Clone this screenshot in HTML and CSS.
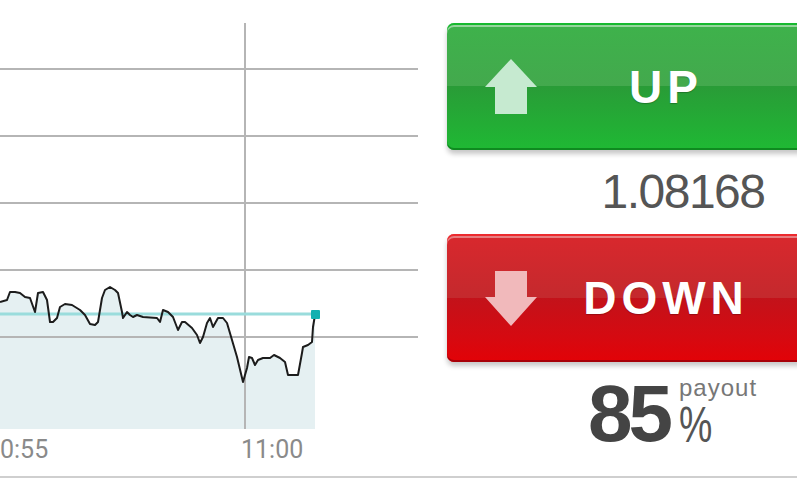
FILE: index.html
```html
<!DOCTYPE html>
<html lang="en">
<head>
  <meta charset="UTF-8">
  <meta name="viewport" content="width=device-width, initial-scale=1.0">
  <title>Trade</title>
  <link rel="stylesheet" href="styles.css">
</head>
<body>
  <div class="page">
    <div class="chart">
      <svg width="420" height="476" viewBox="0 0 420 476">
        <!-- area under price -->
        <polygon class="area" points="0,302 7,300 10,292 15,292 20,293 25,297 30,298 35,312 38,293 43,292 47,300 50,322 53,322 57,318 60,307 65,304 72,305 80,310 85,315 90,324 95,325 98,322 102,298 105,290 110,287 115,290 118,293 122,312 123,318 127,312 130,315 133,317 137,315 143,317 157,318 160,322 163,310 168,312 173,317 178,330 182,322 185,322 192,328 197,335 200,343 203,337 207,323 210,318 213,327 218,318 223,318 227,323 232,340 237,357 243,382 247,368 249,357 252,358 255,365 258,360 263,358 270,358 274,355 280,358 285,362 288,375 293,375 298,375 302,353 303,347 308,345 312,342 313,327 315,315 315,429 0,429"/>

        <!-- grid -->
        <g class="grid">
          <line x1="0" y1="69" x2="418" y2="69"/>
          <line x1="0" y1="136" x2="418" y2="136"/>
          <line x1="0" y1="203" x2="418" y2="203"/>
          <line x1="0" y1="270" x2="418" y2="270"/>
          <line x1="0" y1="337" x2="418" y2="337"/>
          <line x1="245" y1="23" x2="245" y2="429"/>
        </g>

        <!-- current level -->
        <line class="level" x1="0" y1="314" x2="318" y2="314"/>

        <polyline class="price" points="0,302 7,300 10,292 15,292 20,293 25,297 30,298 35,312 38,293 43,292 47,300 50,322 53,322 57,318 60,307 65,304 72,305 80,310 85,315 90,324 95,325 98,322 102,298 105,290 110,287 115,290 118,293 122,312 123,318 127,312 130,315 133,317 137,315 143,317 157,318 160,322 163,310 168,312 173,317 178,330 182,322 185,322 192,328 197,335 200,343 203,337 207,323 210,318 213,327 218,318 223,318 227,323 232,340 237,357 243,382 247,368 249,357 252,358 255,365 258,360 263,358 270,358 274,355 280,358 285,362 288,375 293,375 298,375 302,353 303,347 308,345 312,342 313,327 315,315"/>

        <rect class="dot" x="311" y="310" width="9" height="9" rx="1"/>

        <text class="axis" x="0" y="458">0:55</text>
        <text class="axis" x="241" y="458">11:00</text>
      </svg>
    </div>

    <div class="panel">
      <button class="trade up">
        <svg class="arrow" width="52" height="55" viewBox="0 0 52 55">
          <polygon points="26,0 52,28 42,28 42,55 10,55 10,28 0,28"/>
        </svg>
        <span class="label">UP</span>
      </button>

      <div class="rate">1.08168</div>

      <button class="trade down">
        <svg class="arrow" width="52" height="55" viewBox="0 0 52 55">
          <polygon points="10,0 42,0 42,26 52,26 26,55 0,26 10,26"/>
        </svg>
        <span class="label">DOWN</span>
      </button>

      <div class="payout">
        <span class="payout-value">85</span>
        <div class="payout-side">
          <span class="payout-title">payout</span>
          <span class="payout-percent">%</span>
        </div>
      </div>
    </div>
  </div>
</body>
</html>
```

FILE: styles.css
```css
body {
  margin: 0;
  padding: 0;
  background: #fff;
  font-family: "Liberation Sans", Arial, sans-serif;
  overflow: hidden;
}
.page {
  display: flex;
  width: 885px;
  height: 476px;
  border-bottom: 2px solid #cfcfcf;
}
.chart {
  width: 420px;
  flex-shrink: 0;
}
.chart svg {
  display: block;
  overflow: hidden;
}
.area {
  fill: #e5f0f2;
}
.grid line {
  stroke: #b5b5b5;
  stroke-width: 2;
}
.level {
  stroke: #9adcdc;
  stroke-width: 3;
}
.price {
  fill: none;
  stroke: #1c1c1c;
  stroke-width: 2;
  stroke-linejoin: round;
}
.dot {
  fill: #12b0b0;
}
.axis {
  font-family: Roboto, "Liberation Sans", sans-serif;
  font-size: 25px;
  fill: #8a8a8a;
}
.panel {
  width: 438px;
  flex-shrink: 0;
  margin-left: 27px;
  padding-top: 23px;
}
.trade {
  display: grid;
  grid-template-columns: 52px 1fr 52px;
  align-items: center;
  width: 100%;
  padding: 0 38px;
  border: none;
  border-radius: 7px;
  font-family: "Liberation Sans", Arial, sans-serif;
  cursor: pointer;
}
.trade .arrow {
  display: block;
}
.trade .label {
  text-align: center;
  color: #fff;
  font-size: 46px;
  font-weight: bold;
  letter-spacing: 5px;
  text-shadow: 0 1px 1px rgba(0, 0, 0, 0.25);
}
.up {
  height: 127px;
  background: linear-gradient(to bottom, #3eb24b 0%, #43a94d 50%, #299c37 50%, #23ad35 80%, #1fb934 100%);
  box-shadow: inset 0 2px 0 #17b82f, inset 0 4px 0 rgba(255, 255, 255, 0.45), inset 0 -2px 0 #0f8a20, 0 4px 5px rgba(0, 0, 0, 0.22);
}
.up .arrow polygon {
  fill: #c6ead0;
}
.down {
  height: 128px;
  background: linear-gradient(to bottom, #d9282d 0%, #c4292d 50%, #c3121a 50%, #d50a11 80%, #e20207 100%);
  box-shadow: inset 0 2px 0 #ec2a2e, inset 0 4px 0 rgba(255, 255, 255, 0.4), inset 0 -2px 0 #a80008, 0 4px 5px rgba(0, 0, 0, 0.22);
}
.down .arrow polygon {
  fill: #f1b9bb;
}
.rate {
  height: 84px;
  line-height: 84px;
  padding-left: 34px;
  text-align: center;
  font-size: 48px;
  letter-spacing: -1.5px;
  color: #555;
}
.payout {
  display: flex;
  align-items: flex-start;
  padding-top: 12px;
  padding-left: 141px;
  color: #444;
}
.payout-value {
  font-size: 80px;
  line-height: 80px;
  font-weight: bold;
  letter-spacing: -4px;
}
.payout-side {
  display: flex;
  flex-direction: column;
  align-items: flex-start;
  margin-left: 10px;
}
.payout-title {
  margin-top: 2px;
  font-size: 24px;
  line-height: 24px;
  letter-spacing: 1px;
  color: #777;
}
.payout-percent {
  display: inline-block;
  margin-top: 3px;
  font-size: 50px;
  line-height: 44px;
  color: #555;
  transform: scaleX(0.75);
  transform-origin: left center;
}
```
